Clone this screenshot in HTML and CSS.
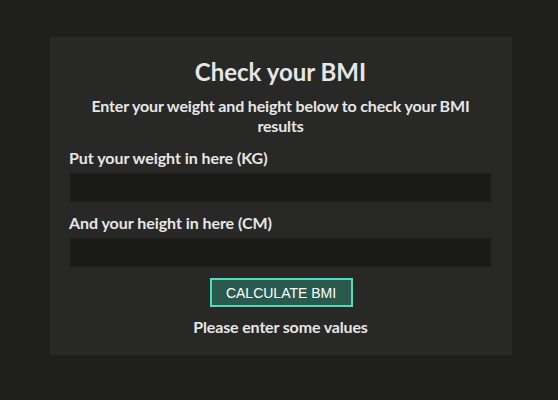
FILE: index.html
```html
<!DOCTYPE html>
<html>
<head>
<meta charset="utf-8">
<link rel="stylesheet" href="styles.css">
</head>
<body>
<main class="card">
  <h1 class="title">Check your BMI</h1>
  <p class="subtitle">Enter your weight and height below to check your BMI results</p>
  <label class="label" for="w">Put your weight in here (KG)</label>
  <input class="field" id="w" type="text">
  <label class="label label-second" for="h">And your height in here (CM)</label>
  <input class="field" id="h" type="text">
  <div class="actions">
    <button class="btn" type="button">CALCULATE BMI</button>
  </div>
  <p class="status">Please enter some values</p>
</main>
</body>
</html>
```
FILE: styles.css
```css
html, body {
  margin: 0;
  padding: 0;
  background: #1f1f1e;
  height: 100%;
}
body {
  font-family: Lato, "Noto Sans", sans-serif;
  color: #e6e6e6;
  padding-top: 37px;
  box-sizing: border-box;
}
.card {
  background: #282827;
  width: 462px;
  box-sizing: border-box;
  margin: 0 0 0 50px;
  padding: 20px 20px 18px 19px;
  display: flex;
  flex-direction: column;
}
.title {
  margin: 0;
  font-size: 24px;
  font-weight: 700;
  text-align: center;
  line-height: 30px;
}
.subtitle {
  margin: 9px 0 0;
  font-size: 16px;
  font-weight: 700;
  text-align: center;
  line-height: 20px;
  letter-spacing: -0.15px;
}
.label {
  margin-top: 12px;
  font-size: 16px;
  font-weight: 700;
  line-height: 20px;
  letter-spacing: -0.05px;
}
.label-second {
  margin-top: 10px;
}
.field {
  margin: 4px 0 0;
  height: 31px;
  box-sizing: border-box;
  width: 423px;
  background: #1a1a19;
  border: 2px solid #222221;
  outline: none;
  color: #e6e6e6;
}
.actions {
  display: flex;
  justify-content: center;
  margin-top: 10px;
}
.btn {
  font-family: "Liberation Sans", Arial, sans-serif;
  font-size: 14px;
  color: #ffffff;
  background: #2a5a4e;
  border: 2px solid #4fdcb8;
  width: 143px;
  height: 29px;
  padding: 0;
  margin-left: 1px;
}
.status {
  margin: 10px 0 0;
  text-align: center;
  font-size: 16px;
  font-weight: 700;
  line-height: 20px;
  letter-spacing: -0.15px;
}
```
